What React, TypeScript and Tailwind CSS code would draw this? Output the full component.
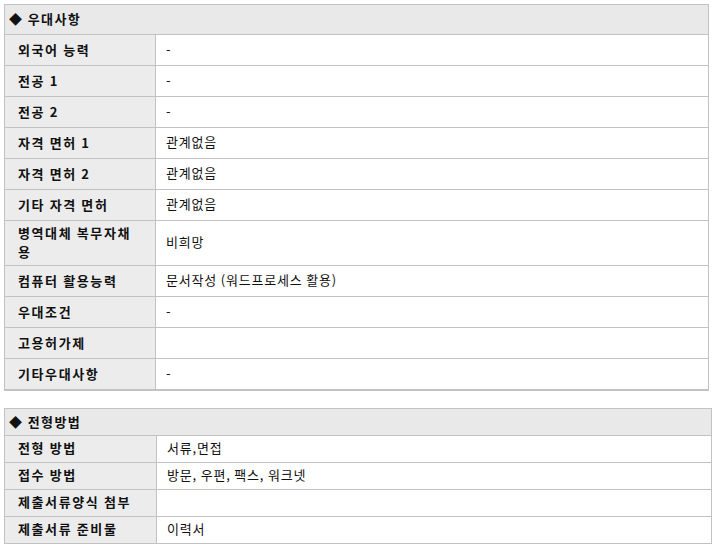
const favorRows: { label: string; value: string; tall?: boolean }[] = [
  { label: "외국어 능력", value: "-" },
  { label: "전공 1", value: "-" },
  { label: "전공 2", value: "-" },
  { label: "자격 면허 1", value: "관계없음" },
  { label: "자격 면허 2", value: "관계없음" },
  { label: "기타 자격 면허", value: "관계없음" },
  { label: "병역대체 복무자채용", value: "비희망", tall: true },
  { label: "컴퓨터 활용능력", value: "문서작성 (워드프로세스 활용)" },
  { label: "우대조건", value: "-" },
  { label: "고용허가제", value: "" },
  { label: "기타우대사항", value: "-" },
];

const screenRows = [
  { label: "전형 방법", value: "서류,면접" },
  { label: "접수 방법", value: "방문, 우편, 팩스, 워크넷" },
  { label: "제출서류양식 첨부", value: "" },
  { label: "제출서류 준비물", value: "이력서" },
];

const font = { fontFamily: '"Noto Sans CJK KR", "Noto Sans", sans-serif' };

const App = () => {
  return (
    <div className="min-h-screen bg-white pl-[4px] pt-[4px] text-[13px] text-[#111]" style={font}>
      <div className="w-[705px] border border-b-2 border-[#c2c2c2]">
        <div className="h-[29px] bg-[#e9e9e9] flex items-center pl-[4px] pb-[1px] font-bold text-[13px] tracking-[1.4px]">◆ 우대사항</div>
        {favorRows.map((r) => (
          <div key={r.label} className={`grid grid-cols-[151px_1fr] border-t border-[#c2c2c2] ${r.tall ? "h-[45px]" : "h-[31px]"}`}>
            <div className="bg-[#ececec] border-r border-[#c2c2c2] flex items-center pl-[13px] pr-1 pb-[2px] font-bold leading-[19px] tracking-[1.6px]">
              {r.tall ? (
                <span>병역대체 복무자채<br />용</span>
              ) : (
                r.label
              )}
            </div>
            <div className="flex items-center pl-[10px] pb-[2px] tracking-[0.8px]">{r.value}</div>
          </div>
        ))}
      </div>

      <div className="w-[708px] mt-[17px] border border-[#c2c2c2]">
        <div className="h-[26px] bg-[#e9e9e9] flex items-center pl-[4px] pb-[1px] font-bold text-[13px] tracking-[1.4px]">◆ 전형방법</div>
        {screenRows.map((r) => (
          <div key={r.label} className="grid grid-cols-[152px_1fr] h-[27px] border-t border-[#c2c2c2]">
            <div className="bg-[#ececec] border-r border-[#c2c2c2] flex items-center pl-[13px] pb-[2px] font-bold tracking-[1.6px]">{r.label}</div>
            <div className="flex items-center pl-[10px] pb-[2px] tracking-[0.8px]">{r.value}</div>
          </div>
        ))}
      </div>
    </div>
  );
};

export default App;
